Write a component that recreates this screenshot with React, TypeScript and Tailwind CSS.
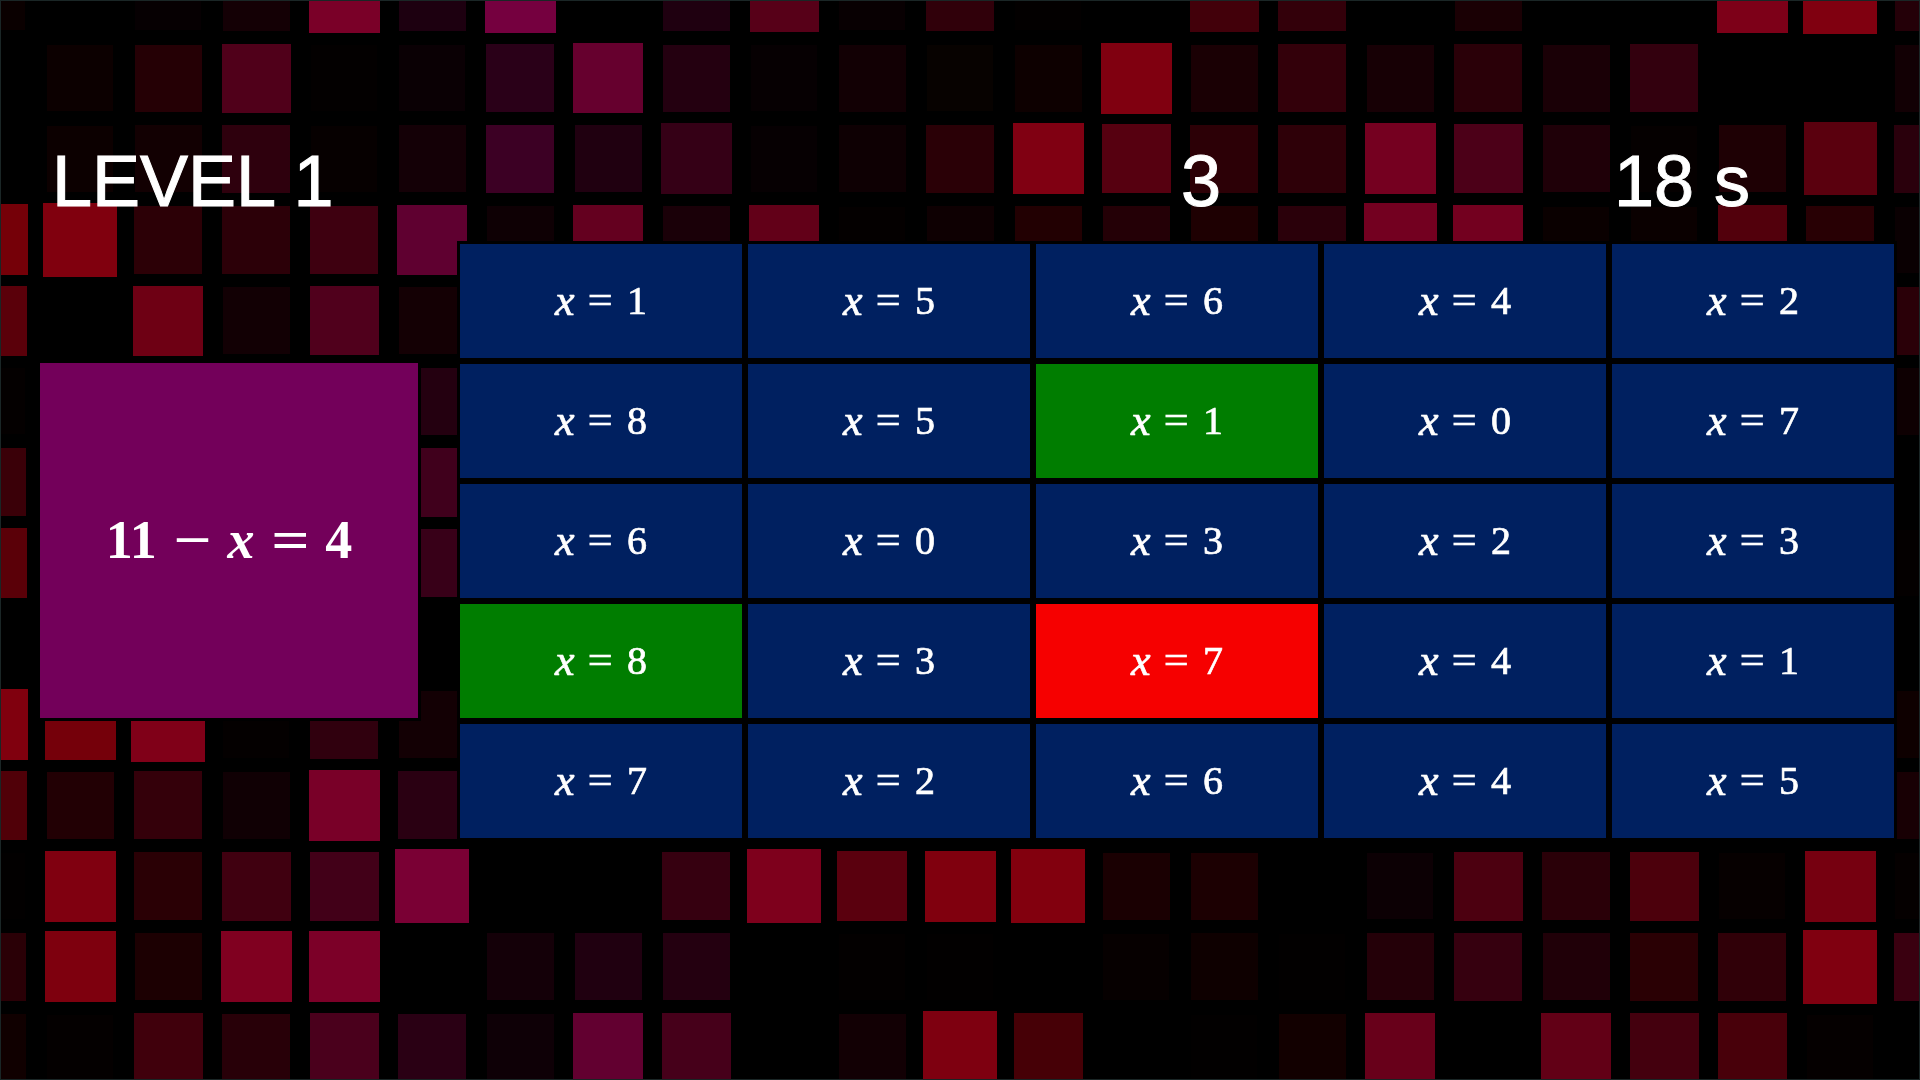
const tileRows = [
  "0a0000 0 060002 140005 7a0028 1d0010 75003f 0 1f0010 570018 080002 30000a 030000 0 42000a 33000a 0 1a0004 0 0 7d0018 800010+ 240008",
  "0 0c0000 250005 50001a 030000 0a0004 2a0018 66002e 240010 060002 120004 070200 0d0000 800010 1a0004 33000a 170005 2a0008 1a0006 33000e 0 0 120004",
  "0 0c0000 120002 2e000d 060000 140006 3c0024 200010 350016+ 060002 0e0003 2a0006 800012 560010 2c0006 2e0008 750020 4c0018 1f0008 050000 1e0004 5a000e+ 2a000c",
  "750008 80000e+ 2c0006 2c0008 3e0010 5f0030 0e0004 64001f 1a0008 620018 040000 0e0002 220002 240006 1e0002 2a000a 730020+ 73001f 0a0000 0a0000 52000c 280004 0a0002",
  "5a000a 0 6e0014 120004 50001c 140004 0 0 0 0 0 0 0 0 0 0 0 0 0 0 0 0 2a0008",
  "040000 0 0 0 0 240010 0 0 0 0 0 0 0 0 0 0 0 0 0 0 0 0 0e0002",
  "3a0008 0 0 0 0 40001c 0 0 0 0 0 0 0 0 0 0 0 0 0 0 0 0 0",
  "5a0008 0 0 0 0 380018 0 0 0 0 0 0 0 0 0 0 0 0 0 0 0 0 040000",
  "0 0 0 0 0 0 0 0 0 0 0 0 0 0 0 0 0 0 0 0 0 0 0",
  "80000e 75000a 800018+ 040000 30000e 130004 0 0 0 0 0 0 0 0 0 0 0 0 0 0 0 0 0e0000",
  "500008 220004 34000a 100004 790028 2a0012 0 0 0 0 0 0 0 0 0 0 0 0 0 0 0 0 180004",
  "020000 800010 2a0005 400010 420018 7a0034+ 0 0 360010 7e001c+ 5a000e 80000e 82000e+ 1a0002 1c0002 0 0c0004 4c0010 2a0008 4c000c 060000 760010 050000",
  "2a0006 7e000e 1c0002 800020 7c0028 0 140008 200010 240010 0 030000 020000 0 060000 0e0000 020000 240008 36000f 200008 2a0004 300008 800010+ 3a0010",
  "100000 040000 40000c 280008 4a001c 2a0014 0e0006 620030 46001a 0 120004 7e0010+ 460006 0 020000 120000 68001a 0 620016 44000e 48000a 050000 0",
];

const answers = [
  [1, 5, 6, 4, 2],
  [8, 5, 1, 0, 7],
  [6, 0, 3, 2, 3],
  [8, 3, 7, 4, 1],
  [7, 2, 6, 4, 5],
];

function cellColor(row: number, col: number) {
  if ((row === 1 && col === 2) || (row === 3 && col === 0)) return "bg-[#007d00]";
  if (row === 3 && col === 2) return "bg-[#f60000]";
  return "bg-[#002060]";
}

function Tile({ value }: { value: string }) {
  if (value === "0") return <div />;
  const hex = value.replace("+", "");
  const red = parseInt(hex.slice(0, 2), 16);
  const size = 66 + Math.round((red / 128) * 5) + (value.endsWith("+") ? 3 : 0);
  return (
    <div className="flex items-center justify-center">
      <div style={{ width: size, height: size, backgroundColor: `#${hex}` }} />
    </div>
  );
}

function Backdrop() {
  return (
    <div className="absolute inset-0 overflow-hidden blur-[0.6px]">
      <div className="-ml-[52px] -mt-[43px] grid grid-cols-[repeat(23,88px)] auto-rows-[80.8px]">
        {tileRows.map((row, r) =>
          row.split(" ").map((value, c) => <Tile key={`${r}-${c}`} value={value} />)
        )}
      </div>
    </div>
  );
}

export default function App() {
  return (
    <div className="relative h-[1080px] w-[1920px] overflow-hidden bg-black font-['Liberation_Sans',sans-serif] text-white">
      <Backdrop />
      <div className="relative blur-[0.4px]">
        <div className="flex h-[241px] pl-[52px] pt-[145px] text-[72px] leading-none [-webkit-text-stroke:1px_white]">
          <div className="w-[1129px]">LEVEL 1</div>
          <div className="w-[433px]">3</div>
          <div>18 s</div>
        </div>
        <div className="flex items-start pl-[37px] font-['Liberation_Serif',serif]">
          <div className="mt-[119px] flex h-[361px] w-[384px] items-center justify-center gap-[20px] border-[3px] border-black bg-[#73005a] text-[54px] font-bold">
            <span>11</span>
            <span className="scale-x-125">−</span>
            <span className="italic">x</span>
            <span className="scale-x-125">=</span>
            <span>4</span>
          </div>
          <div className="ml-[36px] grid grid-cols-[repeat(5,288px)] auto-rows-[120px]">
            {answers.map((row, r) =>
              row.map((n, c) => (
                <div
                  key={`${r}-${c}`}
                  className={`flex items-center justify-center gap-[15px] border-[3px] border-black text-[40px] [-webkit-text-stroke:0.7px_white] ${cellColor(r, c)}`}
                >
                  <span className="text-[44px] italic leading-none">x</span>
                  <span className="scale-x-110">=</span>
                  <span>{n}</span>
                </div>
              ))
            )}
          </div>
        </div>
      </div>
      <div className="pointer-events-none absolute inset-0 border border-[#1a2626]" />
    </div>
  );
}
